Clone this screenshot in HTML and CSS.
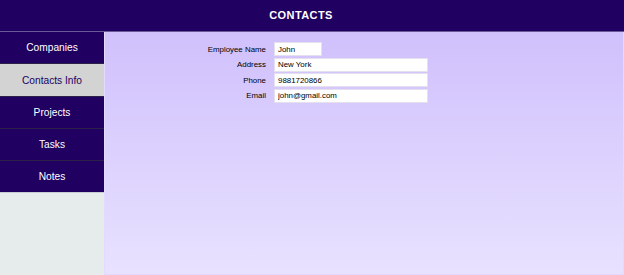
FILE: index.html
```html
<!DOCTYPE html>
<html lang="en">
<head>
    <meta charset="UTF-8">
    <meta name="viewport" content="width=device-width, initial-scale=1.0">
    <title>Contacts</title>
    <link rel="stylesheet" href="styles.css">
</head>
<body>
    <div class="header">CONTACTS</div>

    <div class="main">
        <!-- side menu -->
        <div class="sidebar">
            <div class="nav-item">Companies</div>
            <div class="nav-item active">Contacts Info</div>
            <div class="nav-item">Projects</div>
            <div class="nav-item">Tasks</div>
            <div class="nav-item">Notes</div>
        </div>

        <!-- contact details -->
        <div class="content">
            <div class="form">
                <label>Employee Name</label>
                <input class="short" type="text" value="John">
                <label>Address</label>
                <input type="text" value="New York">
                <label>Phone</label>
                <input type="text" value="9881720866">
                <label>Email</label>
                <input type="text" value="john@gmail.com">
            </div>
        </div>
    </div>
</body>
</html>
```

FILE: styles.css
```css
html, body {
    height: 100%;
}
body {
    margin: 0;
    font-family: 'Liberation Sans', Arial, sans-serif;
    display: flex;
    flex-direction: column;
    background-color: #e6ecec;
}
.header {
    height: 31px;
    line-height: 31px;
    background-color: #200060;
    border-bottom: 1px solid #6a5a9a;
    color: white;
    font-weight: bold;
    font-size: 11px;
    letter-spacing: 0.4px;
    text-align: center;
    padding-right: 22px;
}
.main {
    flex: 1;
    display: flex;
}
.sidebar {
    width: 104px;
    background-color: #e6ecec;
}
.nav-item {
    height: 31px;
    line-height: 31px;
    background-color: #200060;
    border-bottom: 1px solid #2a2048;
    color: white;
    font-size: 10.2px;
    text-align: center;
}
.nav-item.active {
    background-color: #d3d3d3;
    color: #200060;
    height: 32px;
    line-height: 33px;
}
.nav-item:last-child {
    border-bottom: 1px solid #c8ccd4;
}
.content {
    flex: 1;
    background: linear-gradient(#d0c0fc, #e8e2ff);
    border: 1px solid #e2daff;
    border-top: none;
    padding-top: 10px;
}
.form {
    display: grid;
    grid-template-columns: 62px 154px;
    row-gap: 1.5px;
    column-gap: 8px;
    margin-left: 99px;
    align-items: center;
    justify-content: start;
}
.form label {
    font-size: 7.9px;
    color: #000;
    text-align: right;
    white-space: nowrap;
}
.form input {
    box-sizing: border-box;
    height: 14px;
    width: 154px;
    padding: 0 3px;
    border: 1px solid #e4e0ee;
    background-color: white;
    font-family: 'Liberation Sans', Arial, sans-serif;
    font-size: 7.9px;
    color: #000;
}
.form input.short {
    width: 48px;
}
```
